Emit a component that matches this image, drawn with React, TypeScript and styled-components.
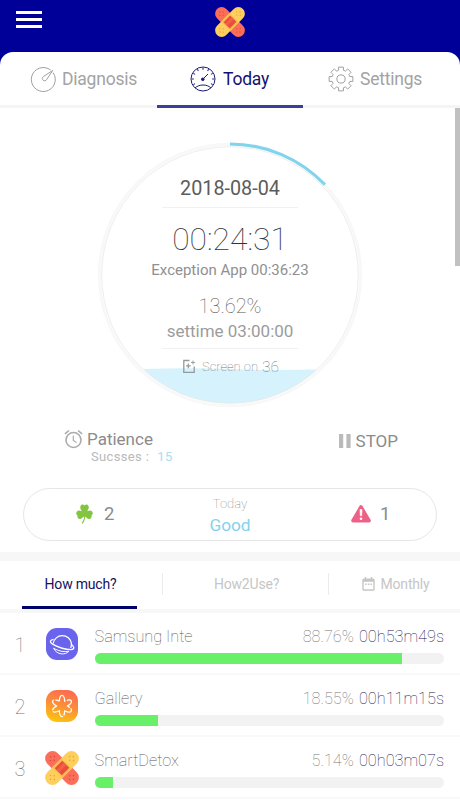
import React from "react";
import styled, { createGlobalStyle } from "styled-components";

const GlobalStyle = createGlobalStyle`
  * { box-sizing: border-box; }
  html, body { margin: 0; padding: 0; background: #fff; }
  body { font-family: Roboto, "Noto Sans", sans-serif; overflow: hidden; }
  svg { display: block; flex: none; }
`;

const Screen = styled.div`
  position: relative;
  width: 460px;
  height: 800px;
  overflow: hidden;
  display: flex;
  flex-direction: column;
  background: #000099;
`;

const Header = styled.header`
  flex: none;
  height: 52px;
  padding: 7px 16px 0;
  display: grid;
  grid-template-columns: 1fr 30px 1fr;
  align-items: start;
`;

const MenuButton = styled.button`
  width: 26px;
  margin-top: 4px;
  padding: 0;
  border: 0;
  background: none;
  display: flex;
  flex-direction: column;
  gap: 4px;
`;

const MenuLine = styled.span`
  height: 3px;
  width: 26px;
  background: #fff;
`;

const Sheet = styled.main`
  flex: 1;
  background: #fff;
  border-radius: 13px 13px 0 0;
  display: flex;
  flex-direction: column;
`;

const Tabs = styled.nav`
  flex: none;
  height: 56px;
  display: grid;
  grid-template-columns: 157px 146px 157px;
  box-shadow: inset 0 -3px 0 #f5f5f5;
`;

const Tab = styled.div<{ $active?: boolean; $left: number; $gap: number }>`
  display: flex;
  align-items: center;
  padding: 0 0 0 ${(p) => p.$left}px;
  gap: ${(p) => p.$gap}px;
  font-size: 17.5px;
  letter-spacing: -0.22px;
  color: ${(p) => (p.$active ? "#12126e" : "#a3a3a3")};
  border-bottom: 3px solid ${(p) => (p.$active ? "#3d3d9c" : "transparent")};
`;

const Gauge = styled.section`
  flex: none;
  height: 312px;
  display: grid;
  justify-content: center;
  grid-template-columns: 270px;
  > * { grid-area: 1 / 1; }
`;

const Dial = styled.svg`
  margin-top: 32px;
`;

const Readout = styled.div`
  display: flex;
  flex-direction: column;
  align-items: center;
  padding-top: 68px;
  white-space: nowrap;
`;

const Line = styled.div<{ $size: number; $height: number; $color: string; $weight?: number; $top?: number }>`
  margin-top: ${(p) => p.$top ?? 0}px;
  font-size: ${(p) => p.$size}px;
  line-height: ${(p) => p.$height}px;
  height: ${(p) => p.$height}px;
  color: ${(p) => p.$color};
  font-weight: ${(p) => p.$weight ?? 400};
`;

const Rule = styled.div<{ $top: number }>`
  width: 136px;
  height: 1px;
  margin-top: ${(p) => p.$top}px;
  background: #f1f1f1;
`;

const ScreenOn = styled.div`
  display: flex;
  align-items: center;
  gap: 6px;
  height: 35px;
  padding-left: 1px;
  font-size: 13px;
  font-weight: 100;
  color: #707679;
`;

const Count = styled.span`
  font-size: 15.5px;
  margin-left: -2px;
`;

const Actions = styled.section`
  flex: none;
  height: 68px;
  padding: 8px 62px 0 64px;
  display: flex;
  justify-content: space-between;
  align-items: flex-start;
`;

const Action = styled.div<{ $gap: number; $top?: number }>`
  display: flex;
  align-items: center;
  height: 22px;
  margin-top: ${(p) => p.$top ?? 0}px;
  gap: ${(p) => p.$gap}px;
  font-size: 17px;
  color: #8b8b8b;
`;

const Successes = styled.div`
  display: flex;
  gap: 8px;
  padding-left: 27px;
  font-size: 13px;
  line-height: 14px;
  letter-spacing: 0.35px;
  color: #b9b9b9;
`;

const SuccessCount = styled.span`
  color: #a4e0f1;
`;

const Summary = styled.section`
  flex: none;
  height: 53px;
  margin: 0 23px 11px;
  border: 1px solid #e6e6e6;
  border-radius: 27px;
  display: grid;
  grid-template-columns: 1fr 80px 1fr;
`;

const Tally = styled.div<{ $left: number; $gap: number }>`
  display: flex;
  align-items: center;
  padding: 0 0 1px ${(p) => p.$left}px;
  gap: ${(p) => p.$gap}px;
  font-size: 18.5px;
  color: #8b8b8b;
`;

const Verdict = styled.div`
  display: flex;
  flex-direction: column;
  align-items: center;
  padding-top: 6px;
`;

const Band = styled.div`
  flex: none;
  height: 9px;
  background: #f7f7f7;
`;

const SubTabs = styled.nav`
  flex: none;
  height: 52px;
  padding: 0 0 4px;
  display: grid;
  grid-template-columns: 162px 166px 132px;
  box-shadow: inset 0 -4px 0 #f7f7f7;
`;

const SubTab = styled.div<{ $active?: boolean }>`
  display: flex;
  align-items: center;
  justify-content: center;
  gap: 6px;
  margin: ${(p) => (p.$active ? "0 25px 0 22px" : "0")};
  padding: ${(p) => (p.$active ? "0 0 0 2px" : "0 0 3px 3px")};
  border-bottom: ${(p) => (p.$active ? "3px solid #00006a" : "0")};
  background: ${(p) => (p.$active ? "none" : "linear-gradient(#ebebeb, #ebebeb) 0 12px / 1px 22px no-repeat")};
  font-size: 14px;
  letter-spacing: -0.2px;
  color: ${(p) => (p.$active ? "#12125e" : "#c6c6c6")};
`;

const AppRow = styled.div`
  flex: none;
  height: 62px;
  display: grid;
  grid-template-columns: 45px 34px 1fr;
  padding-right: 16px;
  border-bottom: 2px solid #f9f9f9;
`;

const Rank = styled.div`
  padding: 19px 0 0 14.5px;
  font-size: 20px;
  line-height: 26px;
  font-weight: 100;
  color: #777;
`;

const AppIcon = styled.div`
  padding-top: 14px;
`;

const Usage = styled.div`
  padding: 13px 0 0 15.5px;
`;

const UsageText = styled.div`
  display: flex;
  height: 21px;
  line-height: 21px;
  font-size: 16.3px;
  font-weight: 100;
  color: #555;
`;

const Percent = styled.span`
  margin-left: auto;
  color: #777;
`;

const Duration = styled.span`
  margin-left: 5px;
  color: #1c1450;
`;

const Track = styled.div`
  height: 11px;
  margin-top: 6px;
  border-radius: 6px;
  background: #f2f2f2;
  overflow: hidden;
`;

const Fill = styled.div`
  height: 100%;
  background: #68f068;
`;

const ScrollThumb = styled.div`
  position: absolute;
  top: 108px;
  right: 0;
  width: 5px;
  height: 158px;
  background: #c1c1c1;
`;

const Bandage = ({ size }: { size: number }) => (
  <svg width={size} height={size} viewBox="0 0 34 34">
    <g transform="rotate(45 17 17)">
      <rect x="-3.8" y="9.6" width="41.6" height="14.8" rx="7.4" fill="#fa6e5a" />
      {[0, 1].map((s) => (
        <g key={s} fill="#d6493c" transform={`translate(${s * 27} 0)`}>
          <circle cx="1" cy="17" r=".7" /><circle cx="3.5" cy="14.2" r=".7" />
          <circle cx="3.5" cy="19.8" r=".7" /><circle cx="6" cy="17" r=".7" />
        </g>
      ))}
    </g>
    <g transform="rotate(-45 17 17)">
      <rect x="-3.8" y="9.6" width="41.6" height="14.8" rx="7.4" fill="#ffcf5c" />
      <rect x="10.5" y="9.6" width="13" height="14.8" fill="#fdbb52" />
      <rect x="11.7" y="12" width="10.6" height="10" fill="#e94e3c" />
      <path d="M11.7 14.5h10.6v3.4H11.7z" fill="#f3604a" />
      {[0, 1].map((s) => (
        <g key={s} fill="#e79b40" transform={`translate(${s * 27} 0)`}>
          <circle cx="1" cy="17" r=".7" /><circle cx="3.5" cy="14.2" r=".7" />
          <circle cx="3.5" cy="19.8" r=".7" /><circle cx="6" cy="17" r=".7" />
        </g>
      ))}
    </g>
  </svg>
);

const DiagnosisIcon = () => (
  <svg width="26" height="26" viewBox="0 0 26 26" fill="none" stroke="#a0a0a0" strokeWidth="1">
    <path d="M20.6 4A12 12 0 1 0 23.1 6.6" />
    <path d="M22.7 4.5L13.2 10.7A2.3 2.3 0 1 0 16.7 13.5Z" strokeLinejoin="round" />
  </svg>
);

const TodayIcon = () => {
  const ticks = [-210, -180, -150, -120, -90, -60, -30, 0, 30];
  return (
    <svg width="26" height="26" viewBox="0 0 26 26" fill="none" stroke="#1b1b72" strokeWidth="1">
      <circle cx="13" cy="13" r="12" />
      {ticks.map((a) => (
        <path key={a} d="M22.2 13h2" transform={`rotate(${a} 13 13)`} />
      ))}
      <path d="M5 22C9 18 17 18 21 22" />
      <path d="M13.7 12.3L18 8" />
      <circle cx="12.8" cy="13.3" r="1.3" fill="#1b1b72" />
    </svg>
  );
};

const gearPath = () => {
  const points: string[] = [];
  for (let i = 0; i < 8; i++) {
    const c = (i * Math.PI) / 4;
    const at = (r: number, o: number) =>
      `${(13 + r * Math.sin(c + o)).toFixed(2)} ${(13 - r * Math.cos(c + o)).toFixed(2)}`;
    points.push(at(9.1, -0.27), at(12.1, -0.2), at(12.1, 0.2), at(9.1, 0.27));
  }
  return `M${points.join("L")}Z`;
};

const SettingsIcon = () => (
  <svg width="26" height="26" viewBox="0 0 26 26" fill="none" stroke="#a0a0a0" strokeWidth="1" strokeLinejoin="round">
    <path d={gearPath()} />
    <circle cx="13" cy="13" r="4.1" />
  </svg>
);

const ScreenIcon = () => (
  <svg width="14" height="15" viewBox="0 0 14 15" fill="none" stroke="#93999c" strokeWidth="1.3">
    <path d="M7.5 1.5H1.8V13.4H12.2V7.5" />
    <path d="M6.3 4.6v4.6M4 6.9h4.6" strokeWidth="1.2" />
    <path d="M11 1.5v4M9 3.5h4" strokeWidth=".9" />
  </svg>
);

const AlarmIcon = () => (
  <svg width="19" height="20" viewBox="0 0 19 20" fill="none" stroke="#ababab" strokeWidth="1.6">
    <circle cx="9.5" cy="11" r="7.5" />
    <path d="M9.3 6.5v5l3.2 2" strokeWidth="1.2" />
    <path d="M.9 4.9L5 1.5M18.1 4.9L14 1.5" />
  </svg>
);

const PauseIcon = () => (
  <svg width="12" height="14" viewBox="0 0 12 14" fill="#bababa">
    <path d="M0 0h4.2v14H0zM7.4 0h4.2v14H7.4z" />
  </svg>
);

const CloverIcon = () => (
  <svg width="17" height="20" viewBox="0 0 17 20">
    <g fill="#83c441">
      <path d="M8.5 9.8C5.5 7 3.5 4.5 4.5 2.1C5.3.1 7.4.1 8.5 1.5C9.6.1 11.7.1 12.5 2.1C13.5 4.5 11.5 7 8.5 9.8Z" />
      <path d="M8.5 9.5C6 7.3 3 5.4 1 7.4C-.4 9 .2 10.9 1.5 11.4C1 13.5 2.3 15.4 4.3 15C6.7 14.6 8 12.1 8.5 9.5Z" />
      <path d="M8.5 9.5C11 7.3 14 5.4 16 7.4C17.4 9 16.8 10.9 15.5 11.4C16 13.5 14.7 15.4 12.7 15C10.3 14.6 9 12.1 8.5 9.5Z" />
      <circle cx="8.5" cy="9.2" r="3.6" />
    </g>
    <path d="M8.5 9.5C9.2 14 8 17.3 6 19.3" fill="none" stroke="#83c441" strokeWidth="1.1" />
  </svg>
);

const WarningIcon = () => (
  <svg width="20" height="18" viewBox="0 0 20 18">
    <path d="M10 2L18 15.7H2Z" fill="#ee6187" stroke="#ee6187" strokeWidth="3.6" strokeLinejoin="round" />
    <path d="M9 4.5h2l-.3 6.2H9.3z" fill="#fff" stroke="#fff" strokeWidth=".6" />
    <circle cx="10" cy="13.7" r="1.3" fill="#fff" />
  </svg>
);

const CalendarIcon = () => (
  <svg width="13" height="14" viewBox="0 0 13 14" fill="none" stroke="#c6c6c6" strokeWidth="1.4">
    <rect x="1" y="2.2" width="11" height="10.8" rx=".8" />
    <path d="M1 3.8h11" strokeWidth="2" />
    <path d="M3.5 0v3M9.5 0v3" />
    <path d="M3.2 7.3h1.5M5.8 7.3h1.5M8.4 7.3h1.5" />
  </svg>
);

const InternetIcon = () => (
  <svg width="34" height="34" viewBox="0 0 34 34" fill="none" stroke="#fff" strokeWidth="1.3">
    <rect x="1" y="1" width="32" height="32" rx="11" fill="#6a64ed" stroke="none" />
    <path d="M8.2 16.5A9.2 9.2 0 0 1 26.4 16.4C26.6 18 26.3 19.6 25.6 21" />
    <path d="M8.6 12.4C4.6 13.2 4.4 15.4 8 17.4C13 20.2 21 22.6 26 22.6C30 22.4 29.3 19.8 26.5 17.6" />
    <path d="M8.6 21.2C11.6 28 20.4 28.4 24 24.2C19 25.4 12.6 23.8 8.6 21.2Z" strokeWidth="1" />
  </svg>
);

const GalleryIcon = () => (
  <svg width="34" height="34" viewBox="0 0 34 34">
    <defs>
      <linearGradient id="galleryFill" x1=".65" y1="0" x2=".35" y2="1">
        <stop offset="0" stopColor="#fb6a50" />
        <stop offset=".5" stopColor="#fb9038" />
        <stop offset="1" stopColor="#fdc40c" />
      </linearGradient>
    </defs>
    <rect x="1" y="1" width="32" height="32" rx="11" fill="url(#galleryFill)" />
    <path
      d="M14.4 12.3C14.3 8.5 15.5 6.4 17 6.4S19.7 8.5 19.6 12.3C23 10.5 25.6 10.6 26.3 11.9S25.6 15.3 22.3 17C25.6 18.7 27 20.8 26.3 22.1S23 23.4 19.6 21.7C19.7 25.5 18.5 27.6 17 27.6S14.3 25.5 14.4 21.7C11 23.4 8.4 23.4 7.7 22.1S8.4 18.7 11.7 17C8.4 15.3 7 13.2 7.7 11.9S11 10.5 14.4 12.3"
      fill="none" stroke="#fff" strokeWidth="1.2" strokeLinejoin="round" strokeDasharray="14.8 1.2"
    />
  </svg>
);

const apps = [
  { name: "Samsung Inte", percent: "88.76%", time: "00h53m49s", fill: 88.1, icon: <InternetIcon /> },
  { name: "Gallery", percent: "18.55%", time: "00h11m15s", fill: 18.1, icon: <GalleryIcon /> },
  { name: "SmartDetox", percent: "5.14%", time: "00h03m07s", fill: 5.2, icon: <Bandage size={34} /> },
];

export default function App() {
  return (
    <>
      <GlobalStyle />
      <Screen>
        <Header>
          <MenuButton aria-label="Menu">
            <MenuLine /><MenuLine /><MenuLine />
          </MenuButton>
          <Bandage size={30} />
        </Header>
        <Sheet>
          <Tabs>
            <Tab $left={30} $gap={6}><DiagnosisIcon />Diagnosis</Tab>
            <Tab $left={33} $gap={7} $active><TodayIcon />Today</Tab>
            <Tab $left={25} $gap={6}><SettingsIcon />Settings</Tab>
          </Tabs>
          <Gauge>
            <Dial width="270" height="270" viewBox="0 0 270 270" fill="none">
              <path d="M48 229Q92 227.5 135 229T222 229.5A128 128 0 0 1 48 229Z" fill="#d5f2fd" />
              <circle cx="135" cy="135" r="130.7" stroke="#f8f8f8" strokeWidth="3" />
              <circle cx="135" cy="135" r="128.3" stroke="#e5e5e5" strokeWidth=".7" />
              <path d="M135 4A131 131 0 0 1 229.9 44.7" stroke="#80d4ec" strokeWidth="3.2" />
            </Dial>
            <Readout>
              <Line $size={19.8} $height={25} $color="#5c5c5c">2018-08-04</Line>
              <Rule $top={6} />
              <Line $size={31.8} $height={40} $top={11} $color="#333" $weight={100}>00:24:31</Line>
              <Line $size={15} $height={20} $top={1} $color="#909090">Exception App 00:36:23</Line>
              <Line $size={20} $height={24} $top={14} $color="#555" $weight={100}>13.62%</Line>
              <Line $size={17} $height={20} $top={3} $color="#9c9c9c">settime 03:00:00</Line>
              <Rule $top={7} />
              <ScreenOn><ScreenIcon /><span>Screen on</span><Count>36</Count></ScreenOn>
            </Readout>
          </Gauge>
          <Actions>
            <div>
              <Action $gap={4}><AlarmIcon />Patience</Action>
              <Successes>Sucsses : <SuccessCount>15</SuccessCount></Successes>
            </div>
            <Action $gap={5} $top={2}><PauseIcon />STOP</Action>
          </Actions>
          <Summary>
            <Tally $left={52} $gap={11}><CloverIcon />2</Tally>
            <Verdict>
              <Line $size={13} $height={17} $color="#808080" $weight={100}>Today</Line>
              <Line $size={17.3} $height={27} $color="#84d2ed">Good</Line>
            </Verdict>
            <Tally $left={81} $gap={9}><WarningIcon />1</Tally>
          </Summary>
          <Band />
          <SubTabs>
            <SubTab $active>How much?</SubTab>
            <SubTab>How2Use?</SubTab>
            <SubTab><CalendarIcon />Monthly</SubTab>
          </SubTabs>
          {apps.map((app, i) => (
            <AppRow key={app.name}>
              <Rank>{i + 1}</Rank>
              <AppIcon>{app.icon}</AppIcon>
              <Usage>
                <UsageText>
                  {app.name}
                  <Percent>{app.percent}</Percent>
                  <Duration>{app.time}</Duration>
                </UsageText>
                <Track><Fill style={{ width: `${app.fill}%` }} /></Track>
              </Usage>
            </AppRow>
          ))}
        </Sheet>
        <ScrollThumb />
      </Screen>
    </>
  );
}
